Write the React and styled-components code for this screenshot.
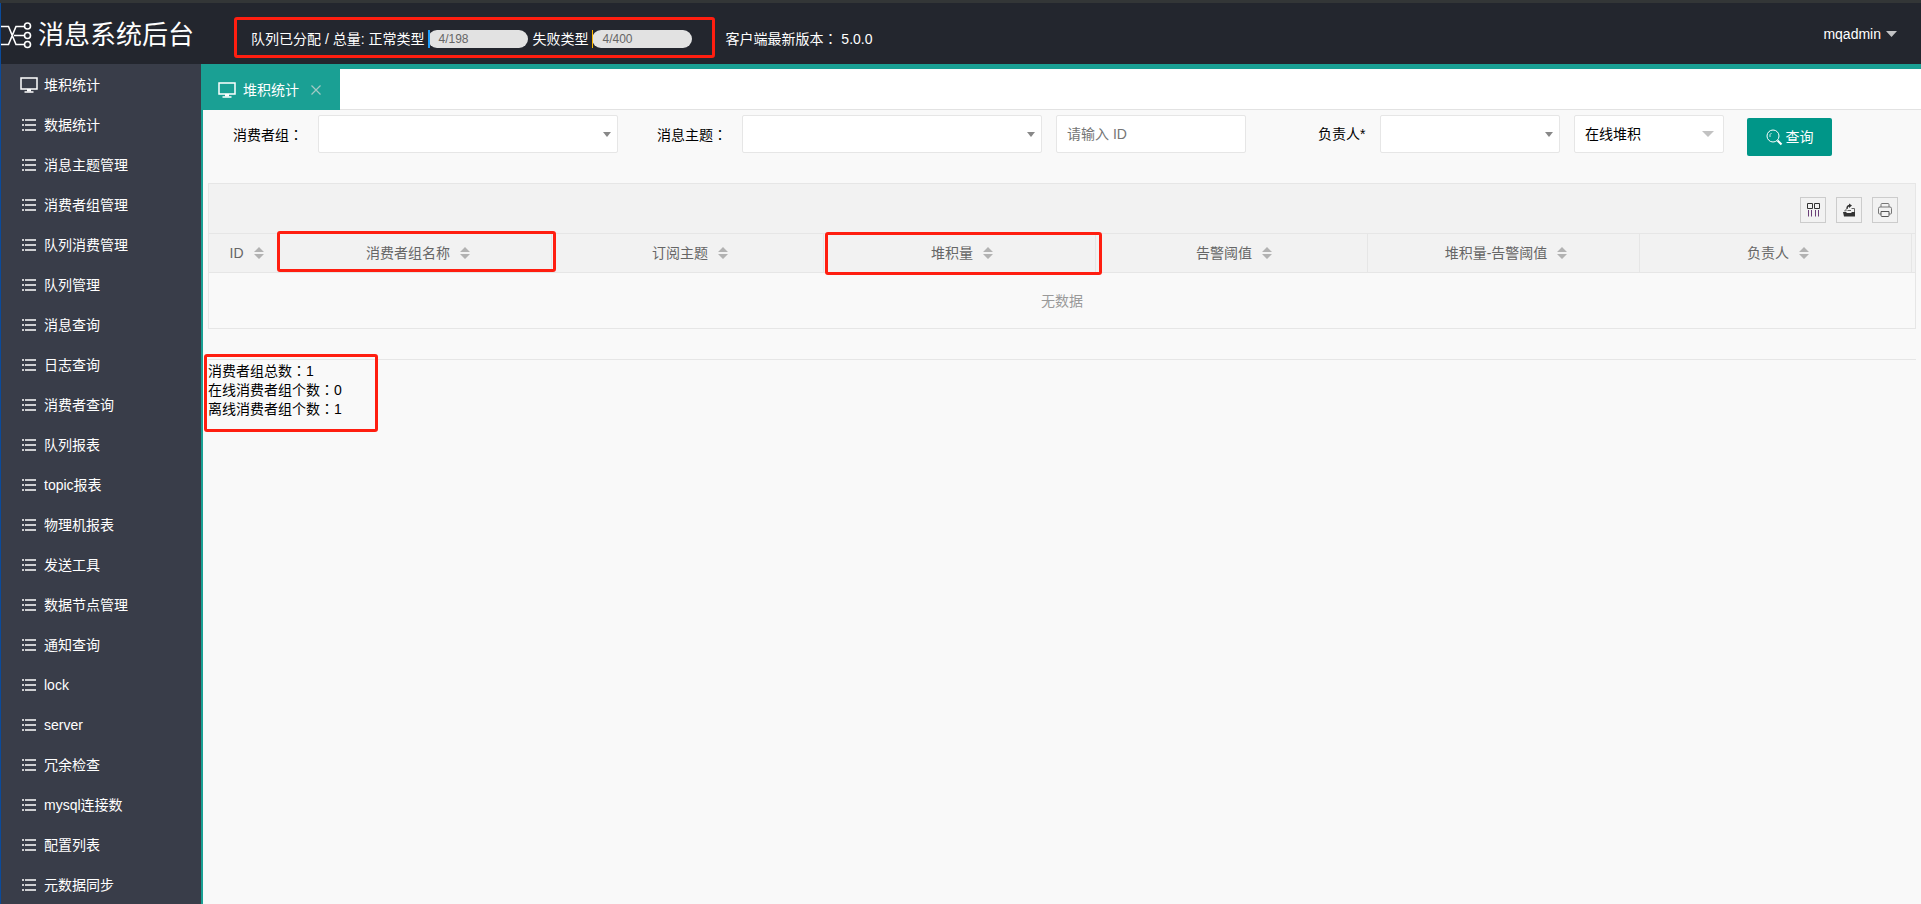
import React from "react";
import styled, { createGlobalStyle, css } from "styled-components";

const GlobalStyle = createGlobalStyle`
  *, *::before, *::after { box-sizing: border-box; }
  body {
    margin: 0;
    background: #f9f9f9;
    color: #000;
    font: 14px/20px "Liberation Sans", "Noto Sans CJK SC", sans-serif;
  }
  button, input, select { font: inherit; color: inherit; margin: 0; }
`;

const Shell = styled.div`
  height: 100vh;
  display: flex;
  flex-direction: column;
  overflow: hidden;
  border-top: 3px solid #333637;
`;

const Header = styled.header`
  flex: none;
  height: 61px;
  display: flex;
  align-items: center;
  border-left: 1px solid #0a4a9a;
  background: #23262e;
  color: #fff;
`;

const Brand = styled.h1`
  flex: none;
  width: 233px;
  margin: 0;
  padding-top: 2px;
  display: flex;
  align-items: center;
  gap: 6px;
  font-size: 26px;
  line-height: 36px;
  font-weight: 400;
`;

const marked = css`
  border: 3px solid #ff1e10;
  border-radius: 3px;
`;

const QueueUsage = styled.div`
  ${marked}
  height: 41px;
  margin-top: 8px;
  padding: 2px 20px 0 14px;
  display: flex;
  align-items: center;
  gap: 4px;
  white-space: nowrap;
`;

const Meter = styled.span`
  position: relative;
  width: 100px;
  height: 18px;
  border-radius: 9px;
  background: #e2e2e2;
`;

const MeterFill = styled.span`
  display: block;
  height: 18px;
  background: ${(p) => p.$color};
`;

const MeterText = styled.span`
  position: absolute;
  left: 10px;
  top: 0;
  font-size: 12px;
  line-height: 19px;
  color: #666;
`;

const Version = styled.div`
  margin: 10px auto 0 10px;
  white-space: pre;
`;

const MidColon = styled.span`
  font-family: "Noto Sans CJK TC", sans-serif;
`;

const UserButton = styled.button`
  display: flex;
  align-items: center;
  gap: 5px;
  padding: 0 24px 0 0;
  border: 0;
  background: none;
  cursor: pointer;
`;

const Body = styled.div`
  flex: 1;
  min-height: 0;
  display: flex;
`;

const Sidebar = styled.nav`
  flex: none;
  width: 201px;
  overflow: hidden;
  padding-top: 1px;
  border-left: 1px solid #0a4a9a;
  background: #393d49;
`;

const NavLink = styled.a`
  height: 40px;
  padding-left: 19px;
  display: flex;
  align-items: center;
  gap: 6px;
  color: #fff;
  text-decoration: none;
  svg { width: 18px; height: 18px; }
`;

const Main = styled.main`
  flex: 1;
  min-width: 0;
  border-top: 5px solid #1aa094;
  border-left: 2px solid #1aa094;
`;

const TabBar = styled.div`
  height: 41px;
  display: flex;
  background: #fff;
  border-bottom: 1px solid #e2e2e2;
`;

const Tab = styled.div`
  height: 41px;
  padding: 0 19px 0 15px;
  display: flex;
  align-items: center;
  background: #1aa094;
  color: #fff;
`;

const TabLabel = styled.button`
  display: flex;
  align-items: center;
  gap: 7px;
  padding: 0;
  border: 0;
  background: none;
`;

const TabClose = styled.button`
  display: flex;
  margin-left: 12px;
  padding: 0;
  border: 0;
  background: none;
  color: #a3c9c4;
`;

const Filters = styled.form`
  display: flex;
  align-items: flex-start;
  padding: 5px 5px 0 30px;
`;

const Label = styled.label`
  flex: none;
  width: ${(p) => p.$width}px;
  line-height: 38px;
  white-space: nowrap;
`;

const SelectWrap = styled.span`
  flex: none;
  display: grid;
  align-items: center;
  width: ${(p) => p.$width}px;
  margin-right: ${(p) => p.$gap}px;
  > * { grid-area: 1 / 1; }
  svg {
    justify-self: end;
    margin-right: ${(p) => p.$inset || 7}px;
    pointer-events: none;
  }
`;

const field = css`
  height: 38px;
  padding: 0 10px;
  border: 1px solid #e6e6e6;
  border-radius: 2px;
  background: #fff;
`;

const Select = styled.select`
  ${field}
  width: 100%;
  appearance: none;
`;

const IdInput = styled.input`
  ${field}
  width: 190px;
  margin-right: 72px;
  &::placeholder { color: #757575; opacity: 1; }
`;

const QueryButton = styled.button`
  flex: none;
  height: 38px;
  width: 85px;
  margin-top: 3px;
  padding: 0;
  display: flex;
  align-items: center;
  justify-content: center;
  gap: 3px;
  border: 0;
  border-radius: 2px;
  background: #009688;
  color: #fff;
`;

const TablePanel = styled.section`
  margin: 27px 5px 0;
  border: 1px solid #e6e6e6;
`;

const Toolbar = styled.div`
  height: 50px;
  padding: 0 17px;
  display: flex;
  align-items: center;
  justify-content: flex-end;
  gap: 10px;
  background: #f2f2f2;
  border-bottom: 1px solid #e6e6e6;
`;

const ToolButton = styled.button`
  width: 26px;
  height: 26px;
  padding: 0;
  display: grid;
  place-items: center;
  margin-top: 3px;
  border: 1px solid #ccc;
  background: none;
`;

const Table = styled.table`
  width: 100%;
  table-layout: fixed;
  border-collapse: separate;
  border-spacing: 0;
`;

const Th = styled.th`
  position: relative;
  width: ${(p) => (p.$width ? p.$width + "px" : "auto")};
  height: 39px;
  padding: 0;
  background: #f2f2f2;
  border-right: ${(p) => (p.$plain ? 0 : "1px solid #e6e6e6")};
  border-bottom: 1px solid #e6e6e6;
  font-weight: 400;
  color: #666;
`;

const HeadMark = styled.span`
  ${marked}
  position: absolute;
  inset: ${(p) => p.$inset};
  pointer-events: none;
  z-index: 1;
`;

const SortButton = styled.button`
  display: inline-flex;
  align-items: center;
  padding: 0;
  border: 0;
  background: none;
  svg { margin: 0 -5px 0 10px; }
`;

const Empty = styled.td`
  height: 55px;
  padding: 0;
  text-align: center;
  color: #999;
`;

const Summary = styled.section`
  margin: 30px 5px 0;
  border-top: 1px solid #e6e6e6;
`;

const SummaryBox = styled.div`
  ${marked}
  width: 174px;
  height: 78px;
  margin: -6px 0 0 -4px;
  padding: 4px 0 0 1px;
  line-height: 19px;
  white-space: nowrap;
`;

const SummaryLine = styled.div`
  height: 19px;
`;

const Shuffle = () => (
  <svg width="31" height="28" viewBox="0 0 31 28" fill="none" stroke="#fff" strokeWidth="1.6" aria-hidden="true">
    <path d="M0 5.500H7.500L15 23.500H23M0 23.500H7.500L15 5.500H23M13 14.500H23" />
    <circle cx="26.500" cy="5" r="3" /><circle cx="26.500" cy="14.500" r="3" /><circle cx="26.500" cy="23.500" r="3" />
  </svg>
);

const Monitor = () => (
  <svg width="18" height="18" viewBox="0 0 18 18" fill="none" stroke="#fff" aria-hidden="true">
    <path d="M1 2H17V13H1Z" strokeWidth="1.500" /><path d="M7 13H11V15.500H7Z" fill="#fff" stroke="none" />
    <path d="M4.500 16H13.500" strokeWidth="1.500" />
  </svg>
);

const ListIcon = () => (
  <svg viewBox="0 0 18 18" stroke="#fff" fill="none" aria-hidden="true">
    <path d="M5 4H16M5 9H16M5 14H16" strokeWidth="1.700" />
    <path d="M2 4H4M2 9H4M2 14H4" strokeWidth="1.700" />
  </svg>
);

const Caret = ({ w = 8, h = 5, color = "#888" }) => (
  <svg width={w} height={h} viewBox="0 0 10 6" preserveAspectRatio="none" aria-hidden="true">
    <path d="M0 0H10L5 6Z" fill={color} />
  </svg>
);

const Sort = () => (
  <svg width="10" height="12" viewBox="0 0 10 12" fill="#b2b2b2" aria-hidden="true">
    <path d="M5 0L10 5H0ZM0 7H10L5 12Z" />
  </svg>
);

const SearchIcon = () => (
  <svg width="17" height="17" viewBox="0 0 17 17" fill="none" stroke="#fff" aria-hidden="true">
    <circle cx="7" cy="7" r="6" /><path d="M4 8A3.500 3.500 0 0 1 5.500 4" strokeWidth="0.800" />
    <path d="M11.500 11.500L15.500 15.500" strokeWidth="2.200" />
  </svg>
);

const ColumnsIcon = () => (
  <svg width="14" height="14" viewBox="0 0 14 14" fill="none" stroke="#333" aria-hidden="true">
    <path d="M1.500 0.500H6.500V5.500H1.500ZM8.500 0.500H13.500V5.500H8.500Z" />
    <path d="M2.500 7V13.500M5.500 7V13.500M9.500 7V13.500M12.500 7V13.500" stroke="#6b3f78" />
  </svg>
);

const ExportIcon = () => (
  <svg width="14" height="14" viewBox="0 0 14 14" fill="none" stroke="#333" aria-hidden="true">
    <path d="M1 9H4L5 10H9L10 9H13V13.500H2Z" fill="#333" stroke="none" />
    <path d="M3 8.500V7H5M12.500 9V5.500H9.500M5.500 7.500H9" stroke="#666" />
    <path d="M5 6Q5 2.500 8 2.500" strokeWidth="1.400" /><path d="M7 0.500L10 2.500L7 5Z" fill="#333" stroke="none" />
  </svg>
);

const PrintIcon = () => (
  <svg width="16" height="16" viewBox="0 0 16 16" fill="none" stroke="#777" aria-hidden="true">
    <path d="M4 5V2.500Q4 1.500 5 1.500H11Q12 1.500 12 2.500V5" />
    <path d="M4 12H2.500Q1.500 12 1.500 11V6.500Q1.500 5 3 5H13Q14.500 5 14.500 6.500V11Q14.500 12 13.500 12H12" />
    <path d="M4 9.500H12V13.500Q12 14.500 11 14.500H5Q4 14.500 4 13.500Z" stroke="#555" />
  </svg>
);

const CloseIcon = () => (
  <svg width="10" height="10" viewBox="0 0 10 10" stroke="currentColor" strokeWidth="1.200" aria-hidden="true">
    <path d="M0.500 0.500L9.500 9.500M9.500 0.500L0.500 9.500" />
  </svg>
);

const NAV = [
  "堆积统计", "数据统计", "消息主题管理", "消费者组管理", "队列消费管理", "队列管理", "消息查询",
  "日志查询", "消费者查询", "队列报表", "topic报表", "物理机报表", "发送工具", "数据节点管理",
  "通知查询", "lock", "server", "冗余检查", "mysql连接数", "配置列表", "元数据同步",
];

const COLUMNS = [
  { name: "ID", width: 71 },
  { name: "消费者组名称", mark: "-3px -5px 0 -3px" },
  { name: "订阅主题" },
  { name: "堆积量", mark: "-2px -7px -3px 1px" },
  { name: "告警阈值" },
  { name: "堆积量-告警阈值" },
  { name: "负责人" },
];

const SUMMARY = [["消费者组总数", 1], ["在线消费者组个数", 0], ["离线消费者组个数", 1]];

const Usage = ({ label, text, fill, color }) => (
  <>
    <span>{label}</span>
    <Meter>
      <MeterFill $color={color} style={{ width: fill }} />
      <MeterText>{text}</MeterText>
    </Meter>
  </>
);

const Picker = ({ id, width, gap }) => (
  <SelectWrap $width={width} $gap={gap}>
    <Select id={id} defaultValue=""><option value="" /></Select>
    <Caret />
  </SelectWrap>
);

export default function App() {
  return (
    <Shell>
      <GlobalStyle />
      <Header>
        <Brand><Shuffle />消息系统后台</Brand>
        <QueueUsage>
          <Usage label="队列已分配 / 总量: 正常类型" text="4/198" fill="2%" color="#1e9fff" />
          <Usage label="失败类型" text="4/400" fill="1%" color="#ffb800" />
        </QueueUsage>
        <Version>客户端最新版本<MidColon>：</MidColon> 5.0.0</Version>
        <UserButton type="button">mqadmin<Caret w={11} h={6} color="#c2c3c5" /></UserButton>
      </Header>
      <Body>
        <Sidebar>
          {NAV.map((name, i) => (
            <NavLink key={name} href="#">{i === 0 ? <Monitor /> : <ListIcon />}{name}</NavLink>
          ))}
        </Sidebar>
        <Main>
          <TabBar>
            <Tab>
              <TabLabel type="button"><Monitor />堆积统计</TabLabel>
              <TabClose type="button" aria-label="关闭"><CloseIcon /></TabClose>
            </Tab>
          </TabBar>
          <Filters>
            <Label htmlFor="group" $width={85}>消费者组<MidColon>：</MidColon></Label>
            <Picker id="group" width={300} gap={39} />
            <Label htmlFor="topic" $width={85}>消息主题<MidColon>：</MidColon></Label>
            <Picker id="topic" width={300} gap={14} />
            <IdInput aria-label="ID" placeholder="请输入 ID" />
            <Label htmlFor="owner" $width={62}>负责人*</Label>
            <Picker id="owner" width={180} gap={14} />
            <SelectWrap $width={150} $gap={23} $inset={10}>
              <Select aria-label="堆积类型"><option>在线堆积</option></Select>
              <Caret w={12} h={6} color="#c2c2c2" />
            </SelectWrap>
            <QueryButton type="button"><SearchIcon />查询</QueryButton>
          </Filters>
          <TablePanel>
            <Toolbar>
              <ToolButton type="button" aria-label="筛选列"><ColumnsIcon /></ToolButton>
              <ToolButton type="button" aria-label="导出"><ExportIcon /></ToolButton>
              <ToolButton type="button" aria-label="打印"><PrintIcon /></ToolButton>
            </Toolbar>
            <Table>
              <thead>
                <tr>
                  {COLUMNS.map((c) => (
                    <Th key={c.name} $width={c.width}>
                      <SortButton type="button">{c.name}<Sort /></SortButton>
                      {c.mark && <HeadMark $inset={c.mark} />}
                    </Th>
                  ))}
                  <Th as="td" $width={3} $plain />
                </tr>
              </thead>
              <tbody>
                <tr><Empty colSpan={8}>无数据</Empty></tr>
              </tbody>
            </Table>
          </TablePanel>
          <Summary>
            <SummaryBox>
              {SUMMARY.map(([name, count]) => (
                <SummaryLine key={name}>{name}<MidColon>：</MidColon>{count}</SummaryLine>
              ))}
            </SummaryBox>
          </Summary>
        </Main>
      </Body>
    </Shell>
  );
}
